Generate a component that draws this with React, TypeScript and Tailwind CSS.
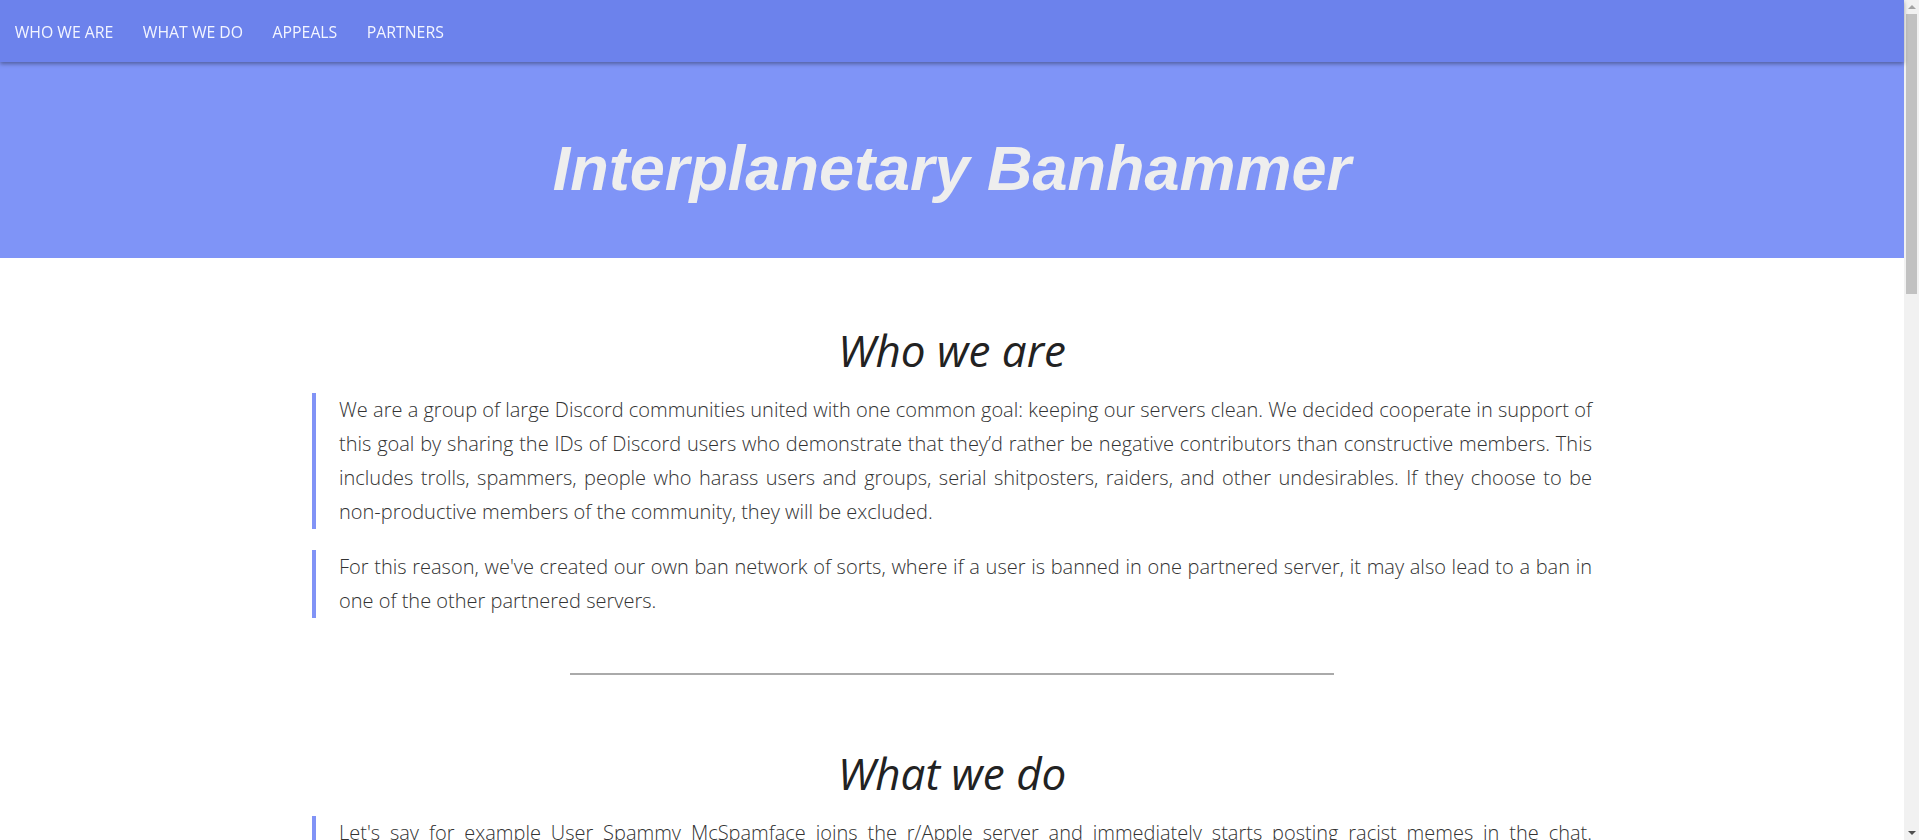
const NAV_LINKS = ['WHO WE ARE', 'WHAT WE DO', 'APPEALS', 'PARTNERS'];

const Quote = ({ children }: { children: React.ReactNode }) => (
  <blockquote className="border-l-4 border-[#8193f6] pl-[23px] text-justify text-[20px] leading-[34px] font-light text-[#333333]">
    {children}
  </blockquote>
);

const SectionTitle = ({ children }: { children: React.ReactNode }) => (
  <h2 className="text-center text-[44px] leading-[54px] italic font-normal text-[#222222]">{children}</h2>
);

// browser-like vertical scrollbar drawn over the right edge
const ScrollBar = () => (
  <div className="fixed right-0 top-0 h-screen w-[15px] bg-[#f1f1f1] flex flex-col items-center">
    <div className="h-[14px] flex items-center justify-center">
      <div className="w-0 h-0 border-l-[4px] border-r-[4px] border-b-[4px] border-l-transparent border-r-transparent border-b-[#a3a3a3]" />
    </div>
    <div className="w-[11px] h-[280px] bg-[#c1c1c1]" />
    <div className="flex-1" />
    <div className="h-[14px] flex items-center justify-center">
      <div className="w-0 h-0 border-l-[4px] border-r-[4px] border-t-[4px] border-l-transparent border-r-transparent border-t-[#505050]" />
    </div>
  </div>
);

export default function App() {
  return (
    <div className="min-h-screen bg-white" style={{ fontFamily: '"Open Sans", "Noto Sans", sans-serif' }}>
      <div className="mr-[15px]">
        {/* Top navigation */}
        <nav className="relative z-10 h-[62px] pt-[4px] bg-[#6c82ec] flex items-center shadow-[0_2px_4px_rgba(0,0,0,0.35)]">
          {NAV_LINKS.map((link) => (
            <a key={link} href="#" className="px-[14.75px] text-[15.8px] text-[#f3f5ff]">
              {link}
            </a>
          ))}
        </nav>

        {/* Hero banner */}
        <header className="h-[196px] pt-[16px] bg-[#7f94f7] flex items-center justify-center">
          <h1
            className="text-[63px] font-bold italic text-[#eeeeee]"
            style={{ fontFamily: '"Liberation Sans", Arial, sans-serif' }}
          >
            Interplanetary Banhammer
          </h1>
        </header>

        <main className="w-[1280px] mx-auto pb-20">
          {/* Who we are */}
          <section className="pt-[65px]">
            <SectionTitle>Who we are</SectionTitle>
            <div className="mt-4 flex flex-col gap-[21px]">
              <Quote>
                We are a group of large Discord communities united with one common goal: keeping our servers clean. We
                decided cooperate in support of this goal by sharing the IDs of Discord users who demonstrate that
                they’d rather be negative contributors than constructive members. This includes trolls, spammers,
                people who harass users and groups, serial shitposters, raiders, and other undesirables. If they choose
                to be non-productive members of the community, they will be excluded.
              </Quote>
              <Quote>
                For this reason, we've created our own ban network of sorts, where if a user is banned in one partnered
                server, it may also lead to a ban in one of the other partnered servers.
              </Quote>
            </div>
          </section>

          <hr className="w-[764px] mx-auto mt-[55px] border-0 border-t-2 border-[#aaaaaa]" />

          {/* What we do */}
          <section className="pt-[71px]">
            <SectionTitle>What we do</SectionTitle>
            <div className="mt-4 flex flex-col gap-[21px]">
              <Quote>
                Let's say for example User Spammy McSpamface joins the r/Apple server and immediately starts posting
                racist memes in the chat. Naturally, the moderators of r/Apple ban him, and then share his ID and the
                reason for the ban with the rest of the partnered servers. Each server then decides for itself whether
                or not to take action.
              </Quote>
              <Quote>
                This way, troublemakers are stopped before they can cause harm elsewhere, and moderators spend less
                time cleaning up after the same people over and over again.
              </Quote>
            </div>
          </section>
        </main>
      </div>
      <ScrollBar />
    </div>
  );
}
